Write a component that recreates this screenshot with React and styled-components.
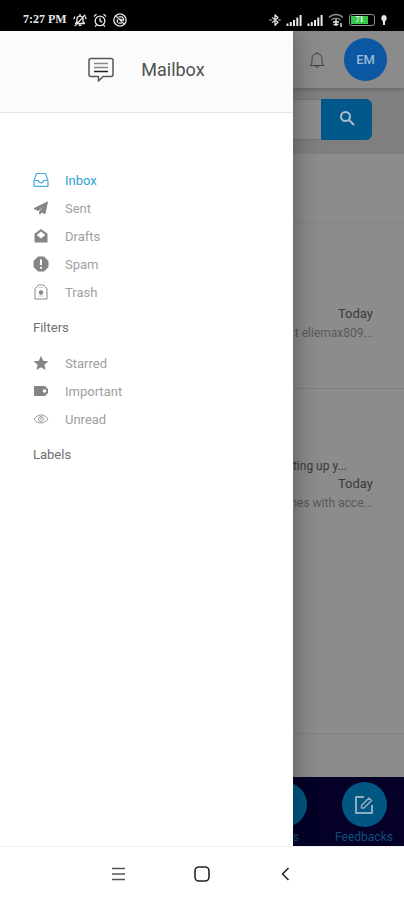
import styled, { createGlobalStyle } from 'styled-components';

const GlobalStyle = createGlobalStyle`
  * {
    box-sizing: border-box;
  }

  body {
    margin: 0;
    background: white;
    font-family: Roboto, "Liberation Sans", sans-serif;
  }

  button,
  input {
    font: inherit;
    border: 0;
    padding: 0;
    background: none;
  }
`;

const Screen = styled.div`
  display: flex;
  flex-direction: column;
  min-height: 100vh;
`;

const StatusBar = styled.div`
  display: flex;
  align-items: center;
  justify-content: space-between;
  height: 31px;
  padding: 8px 16px 0 23px;
  background: black;
  color: #e8e8e8;
  font: bold 12px 'Liberation Serif', serif;
`;

const StatusGroup = styled.div`
  display: flex;
  align-items: center;
  gap: ${props => props.$gap}px;
`;

const Battery = styled.span`
  display: flex;
  width: 26px;
  height: 12px;
  padding: 1px;
  border: 1px solid #8d9a8d;
  border-radius: 3px;
`;

const BatteryLevel = styled.span`
  width: 17px;
  background: #36c84b;
  color: white;
  font-size: 8px;
  line-height: 8px;
  text-align: center;
`;

const Content = styled.div`
  display: grid;
  grid-template-columns: 72.5% minmax(0, 1fr);
  flex: 1;
`;

const Drawer = styled.aside`
  z-index: 2;
  background: white;
  box-shadow: 0 0 24px rgba(0, 0, 0, 0.4);
  clip-path: inset(0 -32px 0 0);
`;

const DrawerHeader = styled.header`
  display: flex;
  align-items: center;
  justify-content: center;
  gap: 27px;
  height: 82px;
  padding-bottom: 4px;
  background: #fbfbfb;
  border-bottom: 1px solid #e4e4e4;
`;

const Title = styled.h1`
  margin: 0;
  color: #505050;
  font-size: 18px;
  font-weight: 400;
`;

const Folders = styled.nav`
  padding: 53px 33px 0;
`;

const FolderLink = styled.a`
  display: flex;
  align-items: center;
  gap: 16px;
  height: 28px;
  color: ${props => (props.$active ? '#2f9fd6' : '#a0a0a0')};
  font-size: 13px;
  text-decoration: none;

  svg {
    color: ${props => (props.$active ? '#4aabdb' : '#858585')};
  }
`;

const GroupTitle = styled.h2`
  margin: 0;
  color: #707070;
  font-size: 13px;
  font-weight: 400;
  line-height: 43px;
`;

const Page = styled.main`
  display: flex;
  flex-direction: column;
  overflow: hidden;
  background: #8c8c8c;
`;

const PageHeader = styled.header`
  display: flex;
  align-items: center;
  justify-content: flex-end;
  gap: 18px;
  height: 57px;
  padding-right: 17px;
  background: #8b8b8b;
  box-shadow: 0 1px 4px rgba(0, 0, 0, 0.25);
  z-index: 1;
`;

const IconButton = styled.button`
  display: flex;
  color: #3f3f3f;
`;

const Avatar = styled.button`
  width: 43px;
  height: 43px;
  border-radius: 50%;
  background: #0b57a3;
  color: #9db8d4;
  font-size: 13px;
  font-weight: 500;
`;

const SearchBar = styled.form`
  display: flex;
  height: 66px;
  padding: 11px 32px 14px 0;
  background: #7f7f7f;
`;

const SearchInput = styled.input`
  flex: 1;
  min-width: 0;
  border: 1px solid #777;
  border-width: 1px 0;
  border-radius: 0;
  background: #8c8c8c;
`;

const SearchButton = styled.button`
  display: flex;
  align-items: center;
  justify-content: center;
  width: 51px;
  padding-bottom: 4px;
  border-radius: 0 6px 6px 0;
  background: #02588b;
  color: #a9bccb;
`;

const Toolbar = styled.div`
  height: 69px;
  border-bottom: 1px solid #838383;
`;

const Message = styled.article`
  padding: ${props => props.$top}px 31px 45px 0;
  border-bottom: ${props => (props.$last ? '0' : '1px solid #808080')};
  font-size: 12px;
  line-height: 18px;
  text-align: right;
`;

const Subject = styled.div`
  padding-right: 26px;
  color: #3a3a3a;
  white-space: nowrap;
`;

const MessageDate = styled.div`
  color: #3a3a3a;
  font-size: 13px;
`;

const Preview = styled.div`
  display: flex;
  justify-content: flex-end;
  color: #585858;
  line-height: 20px;
  white-space: nowrap;
`;

const ListFooter = styled.div`
  height: 44px;
  margin-top: auto;
  border-top: 1px solid #828282;
`;

const TabBar = styled.nav`
  display: flex;
  justify-content: flex-end;
  height: 69px;
  background: #040028;
`;

const Tab = styled.a`
  display: flex;
  flex-direction: column;
  flex-shrink: 0;
  align-items: center;
  gap: 2px;
  width: 80px;
  padding-top: 5px;
  color: #0c5079;
  font-size: 12px;
  line-height: 16px;
  text-decoration: none;
`;

const TabIcon = styled.span`
  display: flex;
  align-items: center;
  justify-content: center;
  width: 45px;
  height: 45px;
  border-radius: 50%;
  background: #025782;
  color: #8fabbd;
`;

const TabLabel = styled.span`
  align-self: ${props => (props.$end ? 'flex-end' : 'center')};
  padding-right: ${props => (props.$end ? '25px' : '0')};
`;

const SystemBar = styled.div`
  display: flex;
  align-items: center;
  justify-content: center;
  gap: 67px;
  height: 54px;
  border-top: 1px solid #f0f0f0;
  background: white;
`;

const SystemButton = styled.button`
  display: flex;
  color: #222;
`;

const Icon = ({ size = 16, width = size, height = size, stroke = 1, box = '0 0 16 16', children }) => (
  <svg
    width={width}
    height={height}
    viewBox={box}
    fill="none"
    stroke="currentColor"
    strokeWidth={stroke}
    strokeLinejoin="round"
    aria-hidden="true"
  >
    {children}
  </svg>
);

const icons = {
  inbox: (
    <path d="M1 8.5 3.5 1.5h9L15 8.500v5.800H1V8.500h4.300c.2 1.600 1.200 2.300 2.700 2.300s2.500-.7 2.700-2.300H15" strokeWidth="1.200" />
  ),
  sent: <path d="M14.500 2 1 8.600l4 1.800 6.500-5-4.800 5.800v3l2-2.200 3.300 1.600z" fill="currentColor" />,
  drafts: (
    <>
      <path d="M8 1 1.500 5.800V14.500h13V5.800z" fill="currentColor" stroke="none" />
      <path d="M8 3.600 3.800 7 8 10.600 12.200 7z" fill="white" stroke="none" />
    </>
  ),
  spam: (
    <>
      <path d="M5 .5h6L15.500 5v6L11 15.500H5L.5 11V5z" fill="currentColor" stroke="none" />
      <path d="M8 3.500v5.500M8 10.700v2" stroke="white" strokeWidth="2" />
    </>
  ),
  trash: (
    <>
      <path d="M2 15V4.800L5.500 1h5L14 4.800V15z" />
      <circle cx="8" cy="8.500" r="1.800" fill="currentColor" />
      <path d="M5.800 3.500h4.400M5 12h6" opacity="0.4" />
    </>
  ),
  starred: (
    <path
      d="m8 .8 2.100 4.900 5.300.5-4 3.500 1.200 5.200L8 12.200l-4.600 2.700 1.200-5.200-4-3.500 5.300-.5z"
      fill="currentColor"
      stroke="none"
    />
  ),
  important: (
    <>
      <path d="M1 3h11l3 3v4l-3 3H1z" fill="currentColor" stroke="none" />
      <circle cx="11.500" cy="8" r="1.800" fill="white" stroke="none" />
    </>
  ),
  unread: (
    <>
      <path d="M1 8c2-2.700 4.300-4 7-4s5 1.300 7 4c-2 2.700-4.300 4-7 4s-5-1.300-7-4z" opacity="0.8" />
      <circle cx="8" cy="8" r="2.500" opacity="0.8" />
      <path d="M8 6v3" opacity="0.8" />
    </>
  ),
};

const folders = [
  { id: 'inbox', label: 'Inbox' },
  { id: 'sent', label: 'Sent' },
  { id: 'drafts', label: 'Drafts' },
  { id: 'spam', label: 'Spam' },
  { id: 'trash', label: 'Trash' },
];

const filters = [
  { id: 'starred', label: 'Starred' },
  { id: 'important', label: 'Important' },
  { id: 'unread', label: 'Unread' },
];

const FolderList = ({ items, active }) =>
  items.map(({ id, label }) => (
    <FolderLink key={id} href={`#${id}`} $active={id === active}>
      <Icon>{icons[id]}</Icon>
      {label}
    </FolderLink>
  ));

const Signal = () => (
  <Icon width={16} height={12} box="0 0 16 12" stroke={2}>
    <path d="M1.500 12V9.500M4.800 12V8M8 12V6M11.300 12V3.500M14.600 12V1" />
  </Icon>
);

const PhoneStatus = () => (
  <StatusBar>
    <StatusGroup $gap={6}>
      <span>7:27 PM</span>
      <Icon size={14} stroke={1.5}>
        <path d="M3 12h10l-1.500-2V7a3.500 3.500 0 0 0-7 0v3zM6.500 14h3M8 1v2M14 2 2 15M1 7l1-3M15 7l-1-3" />
      </Icon>
      <Icon size={14} stroke={1.5}>
        <circle cx="8" cy="9" r="5.500" />
        <path d="M8 5.500V9l2.500 1.500M1 4l3-2.500M15 4l-3-2.500M4 13.500l-1.500 2M12 13.500l1.500 2" />
      </Icon>
      <Icon size={14} stroke={1.5}>
        <circle cx="8" cy="8" r="7" />
        <path d="M3 3l10 10M5 11V7.500M6.500 4.500h4l1.500 2v3M6 11.500h4M7 7l4 1" />
      </Icon>
    </StatusGroup>
    <StatusGroup $gap={5}>
      <Icon width={12} height={14} stroke={1.600}>
        <path d="M4 4.500 12 11 8 15V1l4 4-8 6.500M.5 8h3M12.500 8h3" />
      </Icon>
      <Signal />
      <Signal />
      <Icon size={16} stroke={1.400}>
        <path d="M1 5.500c4-4 10-4 14 0M3.500 8c2.500-2.500 6.500-2.500 9 0" stroke="#888" />
        <path d="M8 7v7M5 10h6M5.500 12.500h5M13 11v4" />
      </Icon>
      <Battery>
        <BatteryLevel>71</BatteryLevel>
      </Battery>
      <Icon width={8} height={12} box="0 0 8 12">
        <path d="M4 1a3 3 0 0 0-2 5l1 2v3h2V8l1-2a3 3 0 0 0-2-5z" fill="currentColor" stroke="none" />
      </Icon>
    </StatusGroup>
  </StatusBar>
);

const App = () => {
  return (
    <>
      <GlobalStyle />
      <Screen>
        <PhoneStatus />
        <Content>
          <Drawer>
            <DrawerHeader>
              <Icon size={26} box="0 0 26 26">
                <path d="M3 1.500h20q2 0 2 2v14q0 2-2 2h-8l-4.500 4.500v-4.500H3q-2 0-2-2v-14q0-2 2-2z" stroke="#555" strokeWidth="1.500" />
                <path d="M6 6.500h14M6 10.500h14" stroke="#888" strokeWidth="1.500" />
                <path d="M6 14.500h14" stroke="#222" strokeWidth="1.500" />
              </Icon>
              <Title>Mailbox</Title>
            </DrawerHeader>
            <Folders>
              <FolderList items={folders} active="inbox" />
              <GroupTitle>Filters</GroupTitle>
              <FolderList items={filters} />
              <GroupTitle>Labels</GroupTitle>
            </Folders>
          </Drawer>
          <Page>
            <PageHeader>
              <IconButton type="button" aria-label="Notifications">
                <Icon size={18} box="0 0 18 18">
                  <path d="M2 14.500h14c-1.500-1-2-2-2-4V7.500a5 5 0 0 0-10 0v3c0 2-.5 3-2 4zM7 14.500c.3 2.500 3.700 2.500 4 0M9 2.500V1" />
                </Icon>
              </IconButton>
              <Avatar type="button">EM</Avatar>
            </PageHeader>
            <SearchBar>
              <SearchInput type="search" aria-label="Search mail" />
              <SearchButton type="button" aria-label="Search">
                <Icon stroke={2}>
                  <circle cx="6.500" cy="6.500" r="4.500" />
                  <path d="m10 10 5 5" />
                </Icon>
              </SearchButton>
            </SearchBar>
            <Toolbar />
            <Message $top={82}>
              <MessageDate>Today</MessageDate>
              <Preview>t eliemax809...</Preview>
            </Message>
            <Message $top={68} $last>
              <Subject>ting up y...</Subject>
              <MessageDate>Today</MessageDate>
              <Preview>nes with acce...</Preview>
            </Message>
            <ListFooter />
            <TabBar>
              <Tab href="#more">
                <TabIcon />
                <TabLabel $end>s</TabLabel>
              </Tab>
              <Tab href="#feedbacks">
                <TabIcon>
                  <Icon size={20} box="0 0 20 20" stroke={2}>
                    <path d="M10 2H2v16h16v-8" />
                    <path d="m7.500 10.500 7.500-7.500 2.500 2.500L10 13H7.500z" strokeWidth="1.500" />
                  </Icon>
                </TabIcon>
                <TabLabel>Feedbacks</TabLabel>
              </Tab>
            </TabBar>
          </Page>
        </Content>
        <SystemBar>
          <SystemButton type="button" aria-label="Recent apps">
            <Icon stroke={1.500}>
              <path d="M1 2.500h13M1 8h13M1 13.500h13" stroke="#555" />
            </Icon>
          </SystemButton>
          <SystemButton type="button" aria-label="Home">
            <Icon stroke={1.600}>
              <rect x="1" y="1" width="14" height="14" rx="4" />
            </Icon>
          </SystemButton>
          <SystemButton type="button" aria-label="Back">
            <Icon stroke={1.600}>
              <path d="M11.500 2 5.500 8l6 6" />
            </Icon>
          </SystemButton>
        </SystemBar>
      </Screen>
    </>
  );
};

export default App;
